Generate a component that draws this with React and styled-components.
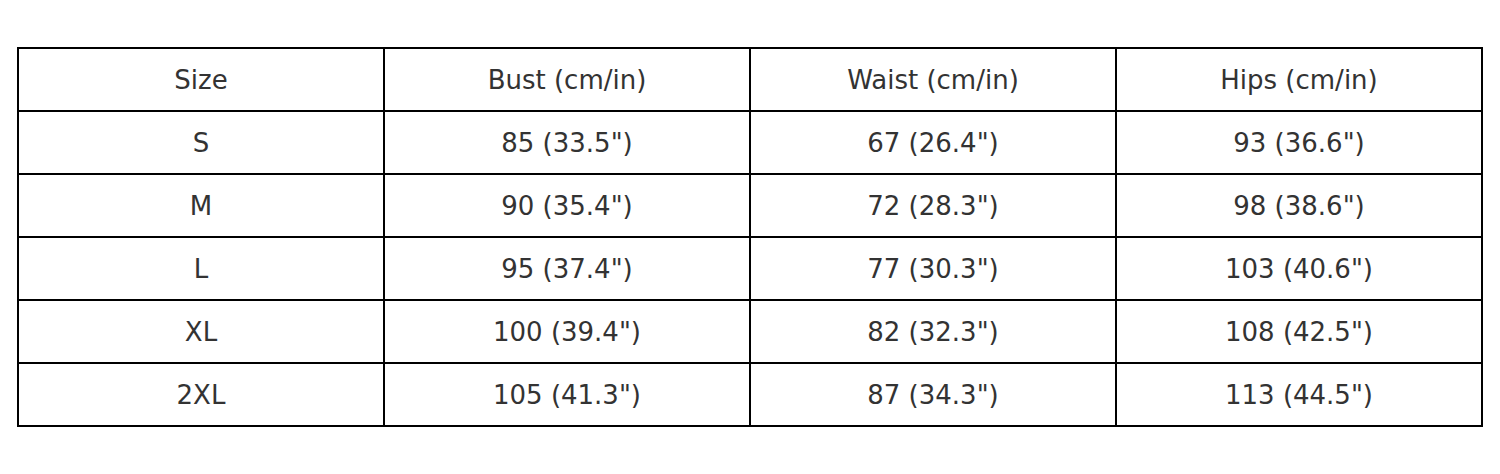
import React from "react";
import { styled, createGlobalStyle } from "styled-components";

const GlobalStyle = createGlobalStyle`
  body {
    margin: 0;
    background: #ffffff;
    font-family: "DejaVu Sans", "Liberation Sans", sans-serif;
  }
`;

const headers = ["Size", "Bust (cm/in)", "Waist (cm/in)", "Hips (cm/in)"];

const rows = [
  ["S", "85 (33.5\")", "67 (26.4\")", "93 (36.6\")"],
  ["M", "90 (35.4\")", "72 (28.3\")", "98 (38.6\")"],
  ["L", "95 (37.4\")", "77 (30.3\")", "103 (40.6\")"],
  ["XL", "100 (39.4\")", "82 (32.3\")", "108 (42.5\")"],
  ["2XL", "105 (41.3\")", "87 (34.3\")", "113 (44.5\")"],
];

const App = () => {
  return (
    <>
      <GlobalStyle />
      <Page>
        <SizeTable>
          <thead>
            <tr>
              {headers.map((h) => (
                <Cell as="th" key={h}>
                  {h}
                </Cell>
              ))}
            </tr>
          </thead>
          <tbody>
            {rows.map((row) => (
              <tr key={row[0]}>
                {row.map((value, i) => (
                  <Cell key={i}>{value}</Cell>
                ))}
              </tr>
            ))}
          </tbody>
        </SizeTable>
      </Page>
    </>
  );
};

export default App;

const Page = styled.div`
  width: 1500px;
  height: 474px;
  padding: 47px 0 0 17px;
  box-sizing: border-box;
`;

const SizeTable = styled.table`
  width: 1466px;
  border-collapse: collapse;
  table-layout: fixed;
  border: 2px solid #000;
`;

const Cell = styled.td`
  height: 61px;
  padding: 0;
  border: 2px solid #000;
  text-align: center;
  vertical-align: middle;
  font-size: 26px;
  font-weight: normal;
  color: #333333;
`;
